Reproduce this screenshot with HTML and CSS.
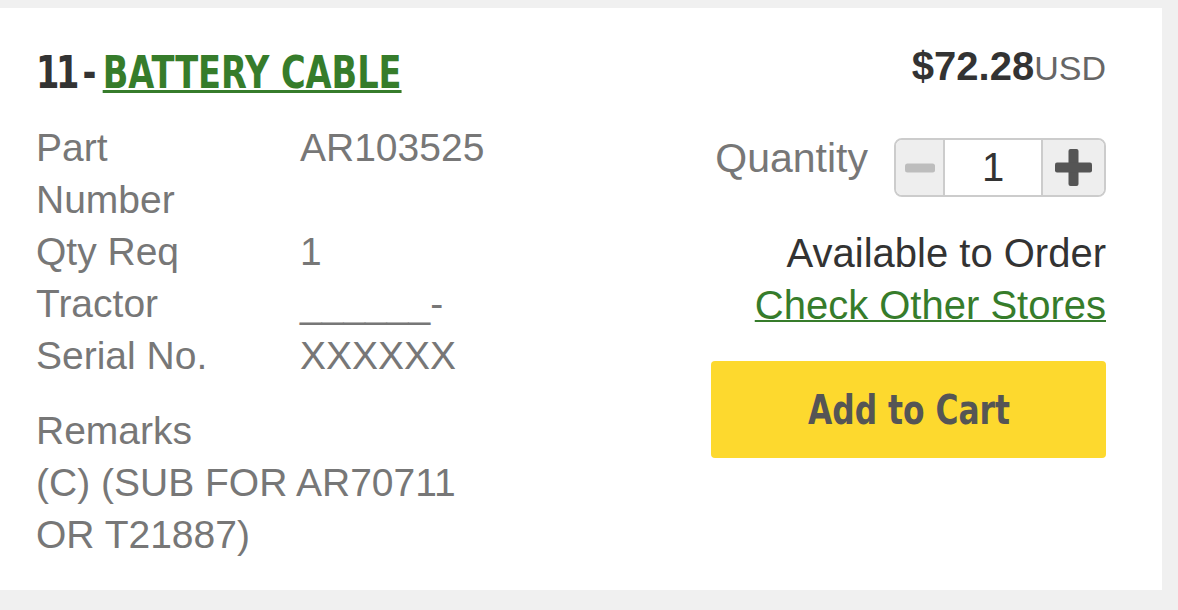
FILE: index.html
```html
<!DOCTYPE html>
<html lang="en">
<head>
  <meta charset="UTF-8">
  <title>Battery Cable</title>
  <link rel="stylesheet" href="styles.css">
</head>
<body>
  <div class="part-card">
    <!-- part info -->
    <div class="part-info">
      <h2 class="part-title"><span class="part-no"><span class="num">11</span> - </span><a href="#">BATTERY CABLE</a></h2>
      <div class="part-specs">
        <div class="spec-label">Part Number</div>
        <div class="spec-value">AR103525</div>
        <div class="spec-label">Qty Req</div>
        <div class="spec-value">1</div>
        <div class="spec-label">Tractor Serial No.</div>
        <div class="spec-value">______-XXXXXX</div>
      </div>
      <div class="remarks">
        <div>Remarks</div>
        <div>(C) (SUB FOR AR70711 OR T21887)</div>
      </div>
    </div>

    <!-- ordering -->
    <div class="part-order">
      <div class="price"><strong>$72.28</strong>USD</div>
      <div class="qty-row">
        <span class="qty-label">Quantity</span>
        <div class="stepper">
          <button class="step-btn step-minus" type="button" aria-label="Decrease">
            <svg width="30" height="10" viewBox="0 0 30 10"><rect x="0" y="0.5" width="30" height="9" rx="2.5"/></svg>
          </button>
          <div class="step-value">1</div>
          <button class="step-btn step-plus" type="button" aria-label="Increase">
            <svg width="37" height="37" viewBox="0 0 37 37"><rect x="13.5" y="0" width="10" height="37" rx="2"/><rect x="0" y="13.5" width="37" height="10" rx="2"/></svg>
          </button>
        </div>
      </div>
      <div class="availability">
        <div>Available to Order</div>
        <a href="#">Check Other Stores</a>
      </div>
      <button class="add-cart" type="button"><span>Add to Cart</span></button>
    </div>
  </div>
</body>
</html>
```
FILE: styles.css
```css
body {
  margin: 0;
  padding-top: 8px;
  background: #f0f0f0;
  font-family: "Liberation Sans", Arial, sans-serif;
  height: 602px;
  overflow: hidden;
}
.part-card {
  width: 1162px;
  box-sizing: border-box;
  background: #fff;
  padding: 36px 56px 29px 36px;
  display: flex;
  justify-content: space-between;
}
.part-info {
  width: 470px;
  color: #777;
  font-size: 39px;
  line-height: 52px;
}
.part-title {
  margin: 0 0 20px;
  font-family: "DejaVu Sans Condensed", sans-serif;
  font-weight: bold;
  font-size: 45px;
  line-height: 58px;
  color: #333;
  white-space: nowrap;
  transform: scaleX(0.83);
  transform-origin: left center;
}
.part-no {
  word-spacing: -6.5px;
}
.part-no .num {
  letter-spacing: -4px;
}
.part-title a {
  color: #367c2b;
  text-decoration: underline;
  text-decoration-thickness: 3px;
  text-underline-offset: 2px;
}
.part-specs {
  display: grid;
  grid-template-columns: 200px 1fr;
  column-gap: 64px;
}
.remarks {
  margin-top: 23px;
}
.part-order {
  width: 394px;
  display: flex;
  flex-direction: column;
  align-items: flex-end;
}
.price {
  font-size: 34px;
  line-height: 44px;
  color: #666;
}
.price strong {
  font-size: 40px;
  color: #333;
}
.qty-row {
  margin-top: 48px;
  display: flex;
  align-items: flex-start;
  gap: 26px;
}
.qty-label {
  font-size: 41px;
  line-height: 40px;
  color: #777;
}
.stepper {
  display: flex;
  width: 212px;
  height: 59px;
  box-sizing: border-box;
  border: 2px solid #ccc;
  border-radius: 8px;
  overflow: hidden;
}
.step-btn {
  border: none;
  padding: 0;
  margin: 0;
  background: #eee;
  display: flex;
  align-items: center;
  justify-content: center;
}
.step-minus {
  width: 49px;
  border-right: 2px solid #ccc;
}
.step-minus svg { fill: #bdbdbd; }
.step-plus {
  flex: 1;
  border-left: 2px solid #ccc;
}
.step-plus svg { fill: #555; }
.step-value {
  width: 96px;
  text-align: center;
  font-size: 40px;
  line-height: 55px;
  color: #333;
}
.availability {
  margin-top: 30px;
  text-align: right;
  font-size: 40px;
  line-height: 52px;
  color: #333;
}
.availability a {
  color: #367c2b;
  text-decoration-thickness: 2px;
}
.add-cart {
  margin-top: 30px;
  width: 395px;
  height: 97px;
  border: none;
  border-radius: 4px;
  background: #fdd92e;
  color: #555;
  font-family: "DejaVu Sans Condensed", sans-serif;
  font-weight: bold;
  font-size: 40px;
}
.add-cart span {
  display: inline-block;
  transform: scaleX(0.87);
}
```
